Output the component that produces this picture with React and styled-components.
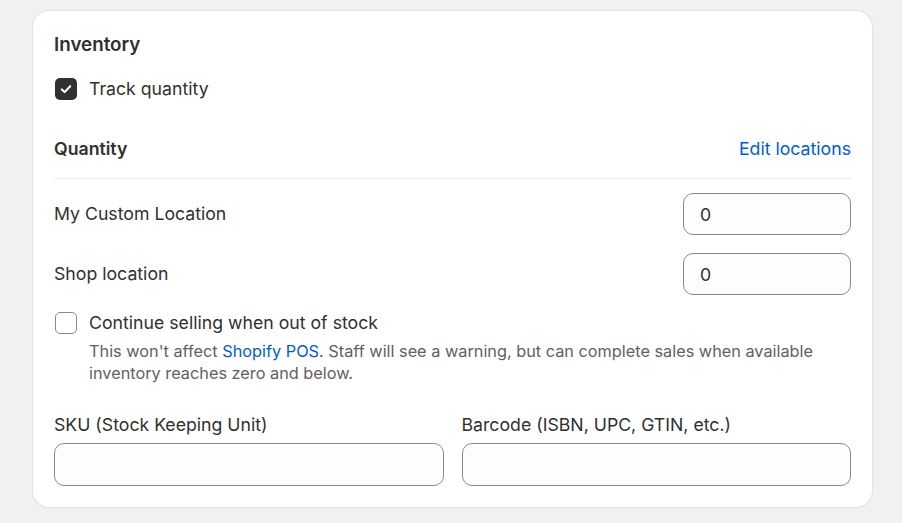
import React from "react";
import styled, { createGlobalStyle } from "styled-components";

const Global = createGlobalStyle`
  html, body { margin: 0; padding: 0; background: #f1f1f1; }
  body { font-family: Inter, "Noto Sans", sans-serif; color: #303030; -webkit-font-smoothing: antialiased; }
  * { box-sizing: border-box; }
`;

const Page = styled.div`
  padding: 11px 30px 16px 33px;
`;

const Card = styled.section`
  width: 839px;
  background: #ffffff;
  border-radius: 16px;
  box-shadow: 0 0 0 1px #e3e3e3, 0 1px 1px 0 rgba(26, 26, 26, 0.12);
  padding: 21px 21px 21px 21px;
  display: flex;
  flex-direction: column;
`;

const Heading = styled.h2`
  margin: 0;
  font-size: 18.8px;
  line-height: 26px;
  font-weight: 600;
  color: #303030;
`;

const CheckRow = styled.label`
  display: flex;
  align-items: center;
  gap: 12px;
  margin-top: ${(p) => p.$mt}px;
  font-size: 17.7px;
  line-height: 26px;
  color: #303030;
`;

const Box = styled.span`
  width: 22px;
  height: 22px;
  border-radius: 5px;
  flex: none;
  display: flex;
  align-items: center;
  justify-content: center;
  background: ${(p) => (p.$checked ? "#303030" : "#ffffff")};
  border: ${(p) => (p.$checked ? "none" : "1px solid #8a8a8a")};
  margin-left: 1px;
`;

const SectionHead = styled.div`
  display: flex;
  align-items: center;
  justify-content: space-between;
  margin-top: 34px;
  padding-bottom: 16px;
  border-bottom: 1px solid #ebebeb;
`;

const SubHeading = styled.h3`
  margin: 0;
  font-size: 17.7px;
  line-height: 26px;
  font-weight: 600;
`;

const Link = styled.a`
  color: #005bd3;
  text-decoration: none;
  font-size: 17.7px;
  line-height: 26px;
`;

const LocationList = styled.div`
  display: flex;
  flex-direction: column;
  gap: 18px;
  margin-top: 14px;
`;

const LocationRow = styled.div`
  display: flex;
  align-items: center;
  justify-content: space-between;
  font-size: 17.7px;
  line-height: 26px;
`;

const Input = styled.input`
  width: ${(p) => p.$w || "100%"};
  height: ${(p) => p.$h || 42}px;
  border: 1px solid #8a8a8a;
  border-radius: 10px;
  background: #fdfdfd;
  padding: 0 16px;
  font-family: inherit;
  font-size: 17.7px;
  color: #303030;
  outline: none;
`;

const Help = styled.p`
  margin: 4px 0 0 35px;
  font-size: 16.3px;
  line-height: 22px;
  color: #616161;
`;

const InlineLink = styled.a`
  color: #005bd3;
  text-decoration: none;
`;

const FieldGrid = styled.div`
  display: grid;
  grid-template-columns: 1fr 1fr;
  gap: 18px;
  margin-top: 28px;
`;

const Field = styled.div`
  display: flex;
  flex-direction: column;
  gap: 5px;
`;

const FieldLabel = styled.label`
  font-size: 17.7px;
  line-height: 26px;
`;

const Check = () => (
  <svg width="14" height="14" viewBox="0 0 14 14" fill="none">
    <path d="M2.8 7.4 L5.6 10.1 L11.2 4.2" stroke="#fff" strokeWidth="2.1" strokeLinecap="round" strokeLinejoin="round" />
  </svg>
);

export default function App() {
  return (
    <>
      <Global />
      <Page>
        <Card>
          <Heading>Inventory</Heading>
          <CheckRow $mt={18}>
            <Box $checked><Check /></Box>
            Track quantity
          </CheckRow>
          <SectionHead>
            <SubHeading>Quantity</SubHeading>
            <Link href="#">Edit locations</Link>
          </SectionHead>
          <LocationList>
            <LocationRow>
              My Custom Location
              <Input $w="168px" defaultValue="0" />
            </LocationRow>
            <LocationRow>
              Shop location
              <Input $w="168px" defaultValue="0" />
            </LocationRow>
          </LocationList>
          <CheckRow $mt={15}>
            <Box />
            Continue selling when out of stock
          </CheckRow>
          <Help>
            This won't affect <InlineLink href="#">Shopify POS</InlineLink>. Staff will see a warning, but can complete sales when available inventory reaches zero and below.
          </Help>
          <FieldGrid>
            <Field>
              <FieldLabel>SKU (Stock Keeping Unit)</FieldLabel>
              <Input $h={43} />
            </Field>
            <Field>
              <FieldLabel>Barcode (ISBN, UPC, GTIN, etc.)</FieldLabel>
              <Input $h={43} />
            </Field>
          </FieldGrid>
        </Card>
      </Page>
    </>
  );
}
